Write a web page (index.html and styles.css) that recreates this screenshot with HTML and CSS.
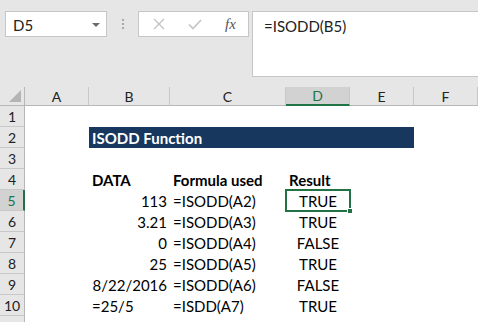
FILE: index.html
```html
<!DOCTYPE html>
<html>
<head>
<meta charset="utf-8">
<link rel="stylesheet" href="styles.css">
</head>
<body>
<div class="toolbar">
  <div class="namebox"><span class="name">D5</span><span class="caret"></span></div>
  <div class="dots"><i></i><i></i><i></i></div>
  <div class="fxbox">
    <svg class="ic-x" width="12" height="12" viewBox="0 0 12 12"><path d="M1 1 L11 11 M11 1 L1 11" stroke="#c4c4c4" stroke-width="1.4" fill="none"/></svg>
    <svg class="ic-ok" width="14" height="11" viewBox="0 0 14 11"><path d="M1 5.5 L5 9.5 L13 1" stroke="#c4c4c4" stroke-width="1.6" fill="none"/></svg>
    <span class="fx">fx</span>
  </div>
  <div class="formula">=ISODD(B5)</div>
</div>
<div class="sheet">
  <div class="corner"><span class="tri"></span></div>
  <div class="ch">A</div>
  <div class="ch">B</div>
  <div class="ch">C</div>
  <div class="ch sel">D</div>
  <div class="ch">E</div>
  <div class="ch">F</div>

  <div class="rh">1</div><div class="c"></div><div class="c"></div><div class="c"></div><div class="c"></div><div class="c"></div><div class="c"></div>

  <div class="rh">2</div><div class="c"></div><div class="title">ISODD Function</div><div class="c"></div>

  <div class="rh">3</div><div class="c"></div><div class="c"></div><div class="c"></div><div class="c"></div><div class="c"></div><div class="c"></div>

  <div class="rh">4</div><div class="c"></div><div class="c b">DATA</div><div class="c b">Formula used</div><div class="c b">Result</div><div class="c"></div><div class="c"></div>

  <div class="rh sel">5</div><div class="c"></div><div class="c r">113</div><div class="c">=ISODD(A2)</div><div class="c m active">TRUE<span class="frame"></span><span class="handle"></span></div><div class="c"></div><div class="c"></div>

  <div class="rh">6</div><div class="c"></div><div class="c r">3.21</div><div class="c">=ISODD(A3)</div><div class="c m">TRUE</div><div class="c"></div><div class="c"></div>

  <div class="rh">7</div><div class="c"></div><div class="c r">0</div><div class="c">=ISODD(A4)</div><div class="c m">FALSE</div><div class="c"></div><div class="c"></div>

  <div class="rh">8</div><div class="c"></div><div class="c r">25</div><div class="c">=ISODD(A5)</div><div class="c m">TRUE</div><div class="c"></div><div class="c"></div>

  <div class="rh">9</div><div class="c"></div><div class="c r">8/22/2016</div><div class="c">=ISODD(A6)</div><div class="c m">FALSE</div><div class="c"></div><div class="c"></div>

  <div class="rh">10</div><div class="c"></div><div class="c">=25/5</div><div class="c">=ISDD(A7)</div><div class="c m">TRUE</div><div class="c"></div><div class="c"></div>

  <div class="rh"></div><div class="c"></div><div class="c"></div><div class="c"></div><div class="c"></div><div class="c"></div><div class="c"></div>
</div>
</body>
</html>
```
FILE: styles.css
```css
* { box-sizing: border-box; }
html, body { margin: 0; padding: 0; }
body {
  width: 478px;
  height: 322px;
  overflow: hidden;
  background: #ffffff;
  font-family: Lato, "Open Sans", sans-serif;
  font-size: 15px;
  color: #000;
}
.toolbar {
  height: 87px;
  background: #e6e6e6;
  display: flex;
  align-items: flex-start;
  padding-top: 11px;
  padding-left: 5px;
}
.namebox {
  width: 102px;
  height: 26px;
  background: #fff;
  border: 1px solid #c6c6c6;
  display: flex;
  align-items: center;
  justify-content: space-between;
  padding: 1px 6px 0 7px;
}
.name { font-size: 15px; color: #222; }
.caret {
  width: 0; height: 0;
  border-left: 4px solid transparent;
  border-right: 4px solid transparent;
  border-top: 4px solid #6b6b6b;
}
.dots {
  width: 31px;
  height: 26px;
  display: flex;
  flex-direction: column;
  align-items: center;
  justify-content: center;
  gap: 2px;
}
.dots i { width: 2px; height: 2px; background: #a8a8a8; display: block; }
.fxbox {
  width: 111px;
  height: 26px;
  background: #fff;
  border: 1px solid #c6c6c6;
  display: flex;
  align-items: center;
  padding-left: 14px;
}
.ic-x { margin-right: 23px; }
.ic-ok { margin-right: 23px; }
.fx {
  font-family: "Liberation Serif", serif;
  font-style: italic;
  font-size: 15px;
  color: #555;
}
.formula {
  margin-left: 3px;
  flex: 1;
  height: 66px;
  background: #fff;
  border: 1px solid #c6c6c6;
  border-right: none;
  padding: 5px 0 0 11px;
  font-size: 15px;
  color: #222;
}
.sheet {
  display: grid;
  grid-template-columns: 25px 64px 81px 116px 64px 64px 64px;
  grid-template-rows: 19px repeat(11, 21px);
}
.corner {
  background: #e6e6e6;
  border-right: 1px solid #b7b7b7;
  border-bottom: 1px solid #b7b7b7;
  position: relative;
}
.tri {
  position: absolute;
  right: 3px;
  bottom: 3px;
  width: 0; height: 0;
  border-left: 12px solid transparent;
  border-bottom: 12px solid #b4b4b4;
}
.ch {
  background: #e6e6e6;
  border-right: 1px solid #c8c8c8;
  border-bottom: 1px solid #b7b7b7;
  display: flex;
  align-items: center;
  justify-content: center;
  font-size: 14px;
  color: #222;
}
.ch.sel {
  background: #d2d2d2;
  color: #217346;
  border-bottom: 2px solid #217346;
}
.rh {
  background: #e6e6e6;
  border-right: 1px solid #b7b7b7;
  border-bottom: 1px solid #c8c8c8;
  display: flex;
  align-items: center;
  justify-content: center;
  font-size: 14px;
  color: #222;
  padding-top: 1px;
}
.rh.sel {
  background: #d2d2d2;
  color: #217346;
  border-right: 2px solid #217346;
}
.c {
  display: flex;
  align-items: flex-end;
  padding: 0 3px 1px 3px;
  line-height: 18px;
  white-space: nowrap;
}
.c.r { justify-content: flex-end; }
.c.m { justify-content: center; }
.c.b { font-weight: bold; }
.title {
  grid-column: 3 / 7;
  background: #17375e;
  color: #fff;
  font-weight: bold;
  display: flex;
  align-items: flex-end;
  padding: 0 3px 1px 3px;
  line-height: 18px;
}
.active { position: relative; }
.frame {
  position: absolute;
  left: -1px;
  top: -1px;
  right: -1px;
  bottom: -1px;
  border: 2px solid #217346;
}
.handle {
  position: absolute;
  right: -3px;
  bottom: -3px;
  width: 6px;
  height: 6px;
  background: #217346;
  border: 1px solid #fff;
}
```
